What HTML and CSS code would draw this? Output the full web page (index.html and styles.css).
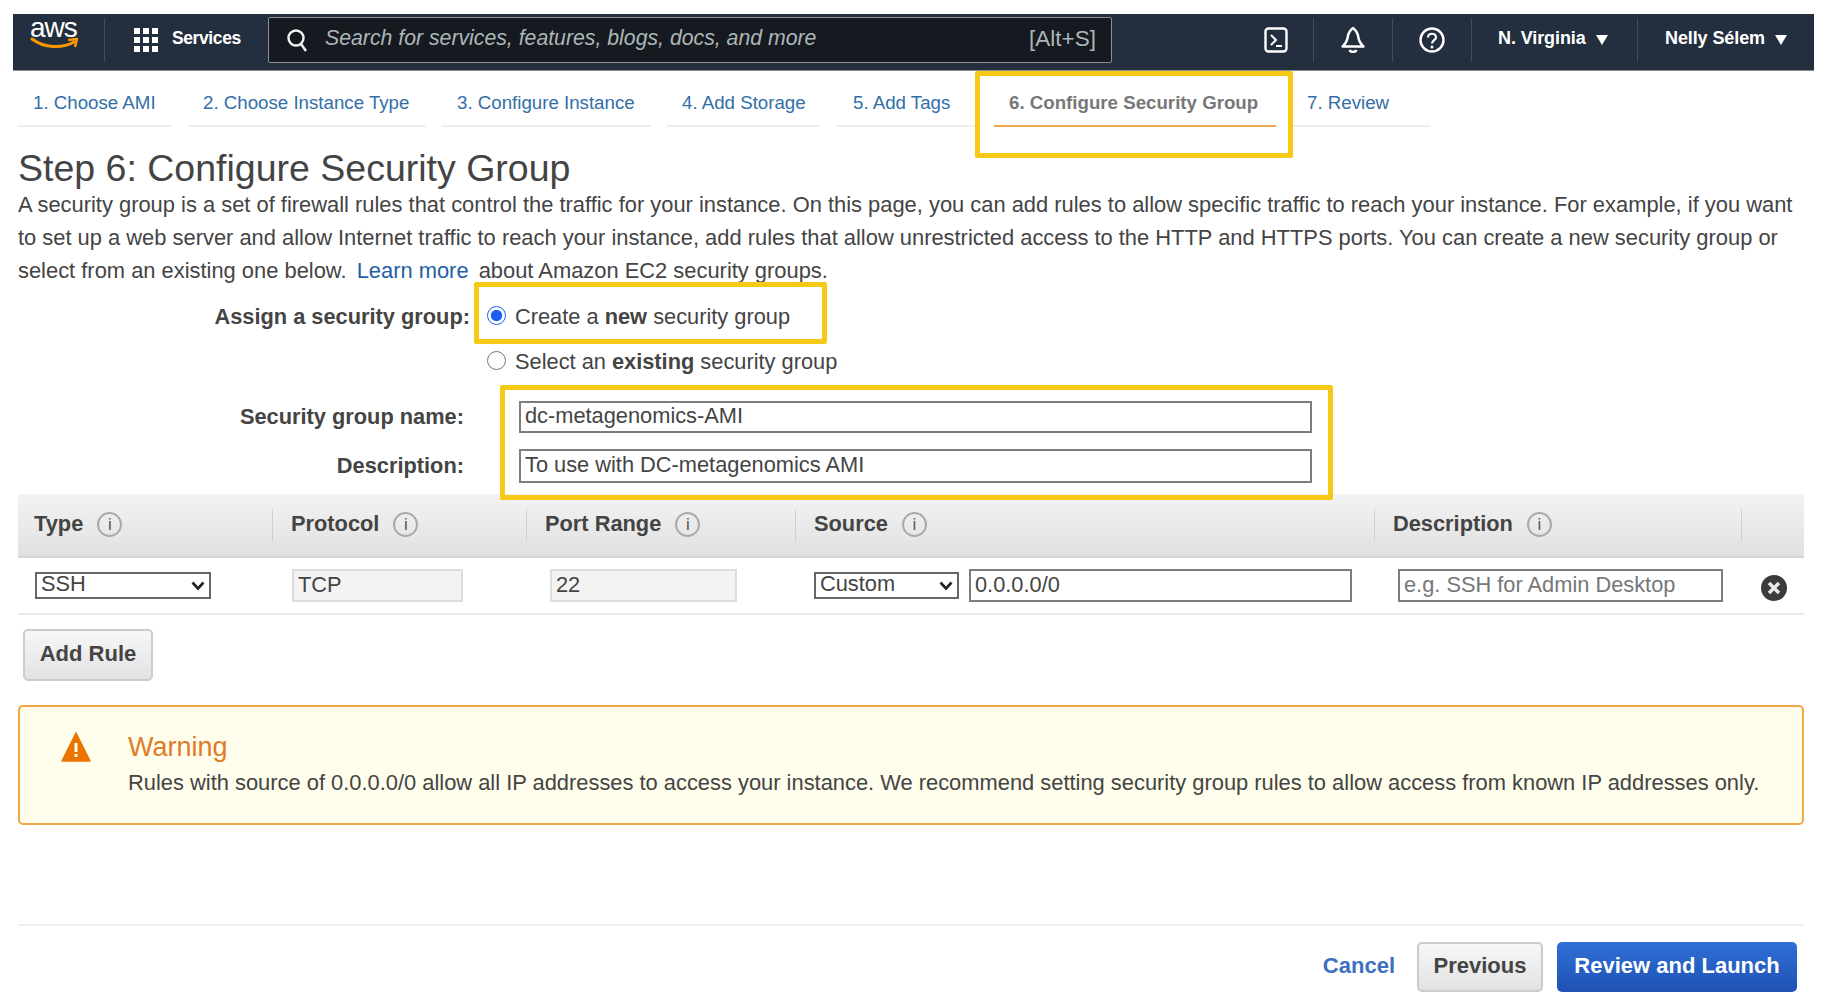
FILE: index.html
```html
<!DOCTYPE html>
<html lang="en">
<head>
    <meta charset="UTF-8">
    <title>Step 6: Configure Security Group</title>
    <link rel="stylesheet" href="styles.css">
</head>
<body>
    <nav class="topnav">
        <div class="logo">
            <span class="logo-text">aws</span>
            <svg class="logo-smile" viewBox="0 0 50 14" width="50" height="14">
                <path d="M2 2C14 11 32 12 44 5" fill="none" stroke="#f90" stroke-width="3" stroke-linecap="round"/>
                <path d="M38 3L47 2L45 10" fill="none" stroke="#f90" stroke-width="2.5" stroke-linejoin="round"/>
            </svg>
        </div>
        <div class="services">
            <svg viewBox="0 0 26 26" width="26" height="26" fill="#fff">
                <rect x="1" y="1" width="6" height="6"/><rect x="10" y="1" width="6" height="6"/><rect x="19" y="1" width="6" height="6"/>
                <rect x="1" y="10" width="6" height="6"/><rect x="10" y="10" width="6" height="6"/><rect x="19" y="10" width="6" height="6"/>
                <rect x="1" y="19" width="6" height="6"/><rect x="10" y="19" width="6" height="6"/><rect x="19" y="19" width="6" height="6"/>
            </svg>
            <span>Services</span>
        </div>
        <div class="search">
            <svg viewBox="0 0 22 24" width="22" height="24" fill="none" stroke="#f2f3f3" stroke-width="2.4">
                <circle cx="10" cy="10" r="7.5"/>
                <path d="M15 16L20 23"/>
            </svg>
            <span class="search-text">Search for services, features, blogs, docs, and more</span>
            <span class="search-key">[Alt+S]</span>
        </div>
        <div class="nav-icon nav-cloudshell">
            <svg viewBox="0 0 24 26" width="24" height="26" fill="none" stroke="#fff" stroke-width="2.4">
                <rect x="1.5" y="1.5" width="21" height="23" rx="3"/>
                <path d="M7 8L12 13L7 18M12 19H18" stroke-width="2"/>
            </svg>
        </div>
        <div class="nav-icon nav-bell">
            <svg viewBox="0 0 26 28" width="26" height="28" fill="none" stroke="#fff" stroke-width="2.4" stroke-linejoin="round">
                <path d="M13 2C9 5 8 8 7.500 12C7 16 5 18 2.500 20.500H23.500C21 18 19 16 18.500 12C18 8 17 5 13 2Z"/>
                <path d="M9.500 24C10.500 26.500 15.500 26.500 16.500 24"/>
            </svg>
        </div>
        <div class="nav-icon nav-help">
            <svg viewBox="0 0 26 26" width="26" height="26" fill="none" stroke="#fff" stroke-width="2.4">
                <circle cx="13" cy="13" r="11.500"/>
                <path d="M9 10.500C9 5.500 17 5.500 17 10.500C17 13 13 13.500 13 16.500" stroke-width="2.200"/>
                <circle cx="13" cy="20" r="1.500" fill="#fff" stroke="none"/>
            </svg>
        </div>
        <div class="nav-menu nav-region">N. Virginia <span class="caret"></span></div>
        <div class="nav-menu nav-user">Nelly Sélem <span class="caret"></span></div>
    </nav>

    <ul class="tabs">
        <li class="tab tab-1">1. Choose AMI</li>
        <li class="tab tab-2">2. Choose Instance Type</li>
        <li class="tab tab-3">3. Configure Instance</li>
        <li class="tab tab-4">4. Add Storage</li>
        <li class="tab tab-5">5. Add Tags</li>
        <li class="tab tab-6 active">6. Configure Security Group</li>
        <li class="tab tab-7">7. Review</li>
    </ul>

    <main class="content">
        <h1>Step 6: Configure Security Group</h1>
        <p class="intro">A security group is a set of firewall rules that control the traffic for your instance. On this page, you can add rules to allow specific traffic to reach your instance. For example, if you want to set up a web server and allow Internet traffic to reach your instance, add rules that allow unrestricted access to the HTTP and HTTPS ports. You can create a new security group or select from an existing one below. <a href="#">Learn more</a> about Amazon EC2 security groups.</p>

        <div class="assign">
            <div class="assign-label">Assign a security group:</div>
            <div class="assign-options">
                <label class="radio"><input type="radio" name="sg" checked><span>Create a <b>new</b> security group</span></label>
                <label class="radio"><input type="radio" name="sg"><span>Select an <b>existing</b> security group</span></label>
            </div>
        </div>

        <div class="field field-name">
            <label for="sg-name">Security group name:</label>
            <input type="text" id="sg-name" class="text-input" value="dc-metagenomics-AMI">
        </div>
        <div class="field field-desc">
            <label for="sg-desc">Description:</label>
            <input type="text" id="sg-desc" class="text-input" value="To use with DC-metagenomics AMI">
        </div>

        <div class="rules-head rules-grid">
            <div class="th">Type <span class="info">i</span></div>
            <div class="th">Protocol <span class="info">i</span></div>
            <div class="th">Port Range <span class="info">i</span></div>
            <div class="th">Source <span class="info">i</span></div>
            <div class="th">Description <span class="info">i</span></div>
            <div class="th"></div>
        </div>
        <div class="rules-row rules-grid">
            <div class="td">
                <div class="select-wrap select-type">
                    <select class="select"><option>SSH</option></select>
                    <svg class="chevron" viewBox="0 0 14 10" width="14" height="10"><path d="M1.500 1.500L7 7.500L12.500 1.500" fill="none" stroke="#222" stroke-width="2.600"/></svg>
                </div>
            </div>
            <div class="td"><input type="text" class="text-input cell-input input-protocol" value="TCP" disabled></div>
            <div class="td"><input type="text" class="text-input cell-input input-port" value="22" disabled></div>
            <div class="td td-source">
                <div class="select-wrap select-source">
                    <select class="select"><option>Custom</option></select>
                    <svg class="chevron" viewBox="0 0 14 10" width="14" height="10"><path d="M1.500 1.500L7 7.500L12.500 1.500" fill="none" stroke="#222" stroke-width="2.600"/></svg>
                </div>
                <input type="text" class="text-input cell-input input-cidr" value="0.0.0.0/0">
            </div>
            <div class="td"><input type="text" class="text-input cell-input input-note" placeholder="e.g. SSH for Admin Desktop"></div>
            <div class="td">
                <svg class="remove" viewBox="0 0 26 26" width="26" height="26">
                    <circle cx="13" cy="13" r="13" fill="#3b3b3b"/>
                    <path d="M8 8L18 18M18 8L8 18" stroke="#e8e8e8" stroke-width="3.500"/>
                </svg>
            </div>
        </div>

        <button class="btn btn-add">Add Rule</button>

        <div class="warning">
            <svg class="warning-icon" viewBox="0 0 30 30" width="30" height="30">
                <path d="M15 1L29 29H1Z" fill="#eb7400" stroke="#eb7400" stroke-width="1.500" stroke-linejoin="round"/>
                <rect x="13.500" y="11" width="3" height="9" fill="#fffdeb"/>
                <rect x="13.500" y="22" width="3" height="3" fill="#fffdeb"/>
            </svg>
            <div>
                <div class="warning-title">Warning</div>
                <div class="warning-text">Rules with source of 0.0.0.0/0 allow all IP addresses to access your instance. We recommend setting security group rules to allow access from known IP addresses only.</div>
            </div>
        </div>

        <footer class="actions">
            <a href="#" class="cancel">Cancel</a>
            <button class="btn btn-previous">Previous</button>
            <button class="btn btn-primary">Review and Launch</button>
        </footer>
    </main>

    <!-- yellow annotation boxes drawn over the screenshot -->
    <div class="callout callout-tab"></div>
    <div class="callout callout-radio"></div>
    <div class="callout callout-fields"></div>
</body>
</html>
```

FILE: styles.css
```css
* {
    box-sizing: border-box;
}
body {
    margin: 0;
    height: 1000px;
    overflow: hidden;
    position: relative;
    font-family: "Liberation Sans", Arial, sans-serif;
    font-size: 21.900px;
    color: #444;
    background-color: #fff;
}

/* top bar */
.topnav {
    display: flex;
    align-items: center;
    height: 57px;
    margin: 14px 16px 0 13px;
    padding-bottom: 5px;
    background-color: #232f3e;
    color: #fff;
    border-bottom: 1px solid #8a8f96;
}
.logo {
    width: 92px;
    height: 44px;
    padding-left: 17px;
    border-right: 1px solid #414b59;
    position: relative;
}
.logo-text {
    display: block;
    font-size: 28px;
    line-height: 24px;
    letter-spacing: -1px;
    margin-top: -2px;
}
.logo-smile {
    display: block;
    margin-top: -3px;
}
.services {
    display: flex;
    align-items: center;
    gap: 13px;
    width: 163px;
    padding-left: 28px;
    font-size: 17.500px;
    font-weight: bold;
    letter-spacing: -0.4px;
}
.services span {
    padding-bottom: 2px;
}
.search {
    display: flex;
    align-items: center;
    width: 844px;
    height: 46px;
    padding: 0 15px 0 17px;
    background-color: #16191f;
    border: 1px solid #8a8f96;
    border-radius: 2px;
    color: #aab7b8;
}
.search-text {
    flex: 1;
    margin-left: 17px;
    padding-bottom: 2px;
    font-size: 21.250px;
    font-style: italic;
}
.search-key {
    padding-bottom: 2px;
    font-size: 22.500px;
}
.nav-icon {
    display: flex;
    align-items: center;
    justify-content: center;
    height: 44px;
    border-right: 1px solid #414b59;
}
.nav-cloudshell {
    width: 202px;
    justify-content: flex-start;
    padding-left: 152px;
}
.nav-bell {
    width: 79px;
}
.nav-help {
    width: 79px;
}
.nav-menu {
    display: flex;
    align-items: center;
    height: 44px;
    padding-bottom: 2px;
    font-size: 18px;
    font-weight: bold;
    letter-spacing: -0.1px;
}
.nav-region {
    width: 166px;
    padding-left: 26px;
    border-right: 1px solid #414b59;
}
.nav-user {
    padding-left: 27px;
}
.caret {
    display: inline-block;
    margin-left: 10px;
    margin-top: 3px;
    border-left: 6px solid transparent;
    border-right: 6px solid transparent;
    border-top: 10px solid #fff;
}

/* wizard tabs */
.tabs {
    display: flex;
    list-style: none;
    height: 56px;
    margin: 0 0 0 18px;
    padding: 0;
    gap: 16px;
}
.tab {
    height: 56px;
    padding-left: 15px;
    line-height: 64px;
    font-size: 18.700px;
    color: #336ea8;
    border-bottom: 2px solid #eee;
}
.tab-1 { width: 154px; }
.tab-2 { width: 238px; }
.tab-3 { width: 209px; }
.tab-4 { width: 153px; }
.tab-5 { width: 142px; padding-left: 17px; }
.tab-6 { width: 282px; }
.tab-7 { width: 138px; }
.tab.active {
    color: #777;
    font-weight: bold;
    border-bottom-color: #eda850;
}

/* page body */
.content {
    padding: 0 26px 0 18px;
}
h1 {
    margin: 22px 0 0;
    font-size: 37.500px;
    font-weight: 400;
    line-height: 39px;
    color: #444;
}
.intro {
    margin: 0;
    line-height: 33px;
}
.intro a {
    color: #1f5fa5;
    text-decoration: none;
    padding: 0 4px;
}
.assign {
    display: flex;
    margin-top: 7px;
}
.assign-label {
    width: 452px;
    text-align: right;
    font-size: 21.800px;
    font-weight: bold;
    line-height: 45px;
}
.assign-options {
    display: flex;
    flex-direction: column;
    margin-left: 16px;
}
.radio {
    display: flex;
    align-items: center;
    height: 45px;
    font-size: 21.800px;
}
.radio input {
    width: 19px;
    height: 19px;
    margin: -3px 9px 0 1px;
    accent-color: #1a5ff0;
}
.field {
    display: flex;
    align-items: center;
}
.field label {
    width: 446px;
    text-align: right;
    font-size: 21.800px;
    font-weight: bold;
}
.field-name {
    margin-top: 17px;
}
.field-desc {
    margin-top: 16px;
}
.field .text-input {
    width: 793px;
    margin-left: 55px;
}
.field-name .text-input {
    height: 32px;
}
.field-desc .text-input {
    height: 34px;
}
.text-input {
    padding: 0 4px 2px;
    font-family: inherit;
    font-size: 21.800px;
    color: #444;
    border: 2px solid #7d7d7d;
    border-radius: 0;
    background-color: #fff;
    outline: none;
}
.text-input::placeholder {
    color: #777;
}

/* rules table */
.rules-grid {
    display: grid;
    grid-template-columns: 255px 254px 269px 579px 367px 62px;
}
.rules-head {
    margin-top: 11px;
    height: 64px;
    align-items: center;
    background: linear-gradient(#f3f3f3, #e1e1e1);
    border-bottom: 2px solid #d5d5d5;
}
.th {
    height: 32px;
    display: flex;
    align-items: center;
    padding: 0 0 2px 18px;
    font-weight: bold;
    font-size: 21.800px;
    border-right: 1px solid #cfcfcf;
}
.th:first-child {
    padding-left: 16px;
}
.th:last-child {
    border-right: none;
}
.info {
    display: inline-block;
    width: 25px;
    height: 25px;
    margin-left: 14px;
    border: 2px solid #aaa;
    border-radius: 50%;
    font-size: 17px;
    font-weight: 400;
    line-height: 21px;
    text-align: center;
    color: #555;
}
.rules-row {
    height: 57px;
    align-items: center;
    border-bottom: 2px solid #eaeaea;
}
.td {
    display: flex;
    align-items: center;
    padding-left: 17px;
}
.td-source {
    padding-left: 18px;
    gap: 10px;
}
.select-wrap {
    position: relative;
    height: 27px;
    background-color: #fff;
    border: 2px solid #666;
}
.select-type {
    width: 176px;
}
.select-source {
    width: 145px;
}
.select {
    appearance: none;
    display: block;
    width: 100%;
    height: 27px;
    margin-top: -4px;
    padding: 0 0 0 4px;
    font-family: inherit;
    font-size: 21.800px;
    color: #444;
    background: transparent;
    border: none;
}
.chevron {
    position: absolute;
    right: 4px;
    top: 7px;
}
.cell-input {
    height: 33px;
}
.cell-input:disabled {
    background-color: #f3f3f3;
    border: 2px solid #ddd;
}
.input-protocol {
    width: 171px;
    margin-left: 2px;
}
.input-port {
    width: 187px;
    margin-left: 6px;
}
.input-cidr {
    width: 383px;
}
.input-note {
    width: 325px;
    margin-left: 6px;
}
.remove {
    margin-left: 2px;
    margin-top: 4px;
}

/* buttons */
.btn {
    padding: 0 0 2px;
    font-family: inherit;
    font-size: 22px;
    font-weight: bold;
    color: #444;
    height: 50px;
    border: 2px solid #ccc;
    border-radius: 5px;
    background: linear-gradient(#f7f7f7, #e2e2e2);
}
.btn-add {
    display: block;
    width: 130px;
    height: 52px;
    margin: 14px 0 0 5px;
}

/* warning */
.warning {
    display: flex;
    height: 120px;
    margin-top: 24px;
    padding: 24px 0 0 41px;
    gap: 37px;
    background-color: #fffdeb;
    border: 2px solid #f2a648;
    border-radius: 5px;
}
.warning-icon {
    margin-top: 1px;
}
.warning-title {
    font-size: 27px;
    line-height: 32px;
    color: #e07b28;
}
.warning-text {
    margin-top: 3px;
    font-size: 21.880px;
    line-height: 33px;
    white-space: nowrap;
}

/* footer */
.actions {
    display: flex;
    align-items: center;
    justify-content: flex-end;
    height: 68px;
    margin-top: 99px;
    padding: 15px 7px 0 0;
    border-top: 2px solid #eee;
}
.cancel {
    margin: 0 22px 2px 0;
    font-size: 22px;
    font-weight: bold;
    color: #3e6fc2;
    text-decoration: none;
}
.btn-previous {
    width: 126px;
    margin-right: 14px;
}
.btn-primary {
    width: 240px;
    color: #fff;
    border: none;
    background: linear-gradient(#2f6fd6, #1f52b4);
}

/* annotation boxes */
.callout {
    position: absolute;
    border: 5px solid #f5c916;
    border-radius: 2px;
}
.callout-tab {
    left: 975px;
    top: 71px;
    width: 318px;
    height: 87px;
}
.callout-radio {
    left: 474px;
    top: 282px;
    width: 353px;
    height: 62px;
}
.callout-fields {
    left: 500px;
    top: 385px;
    width: 833px;
    height: 115px;
}
```
